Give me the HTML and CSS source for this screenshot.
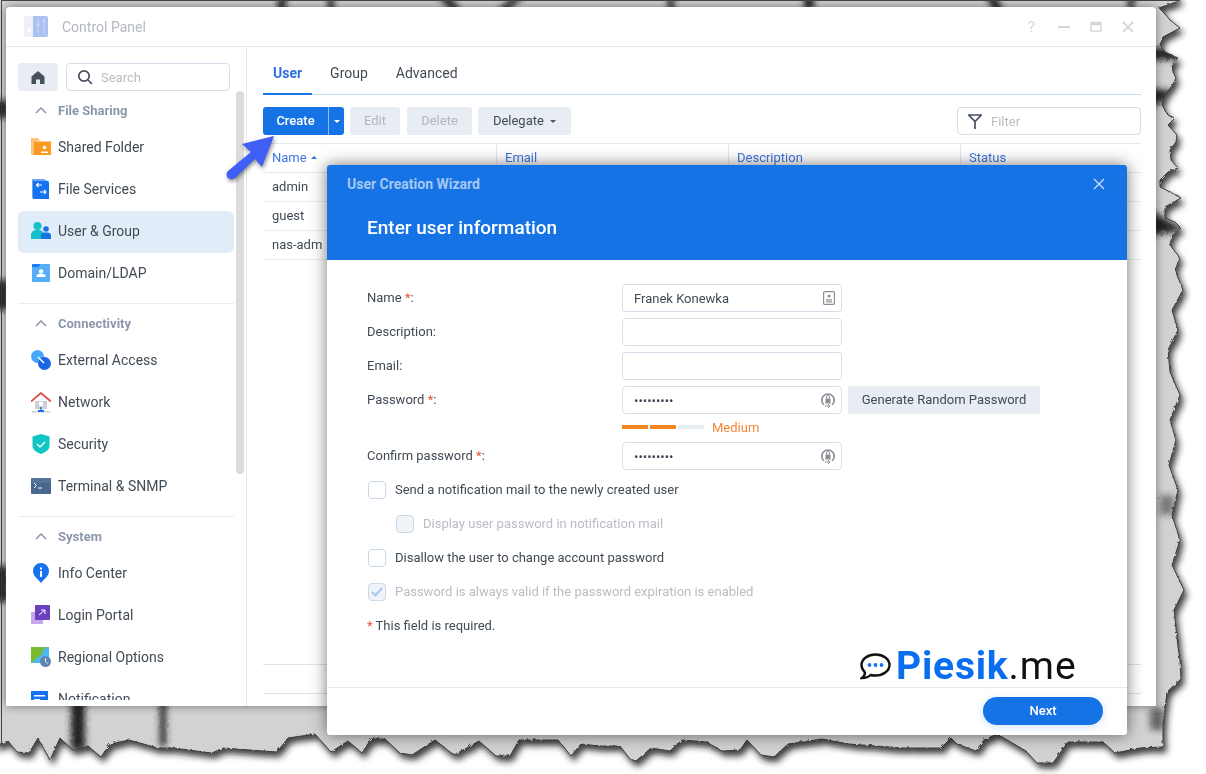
FILE: index.html
```html
<!DOCTYPE html>
<html lang="en">
<head>
  <meta charset="UTF-8" />
  <title>Control Panel</title>
  <link rel="stylesheet" href="styles.css">
</head>
<body>
  <!-- torn paper wallpaper behind the window -->
  <svg class="backdrop" width="1206" height="774" viewBox="0 0 1206 774">
    <defs>
      <filter id="torn" x="-2%" y="-2%" width="104%" height="104%">
        <feTurbulence type="fractalNoise" baseFrequency="0.3" numOctaves="2" seed="4" result="n" />
        <feDisplacementMap in="SourceGraphic" in2="n" scale="3" result="d" />
        <feDropShadow in="d" dx="3" dy="5" stdDeviation="3" flood-color="#222" flood-opacity="0.85" />
      </filter>
      <filter id="soft"><feGaussianBlur stdDeviation="3" /></filter>
      <clipPath id="paper">
        <path d="M-5 -5 L1179 -5 L1179 1 L1159 8 L1165 14 L1170 20 L1180 28 L1163 37 L1160 45 L1165 52 L1178 58 L1172 65 L1173 72 L1176 78 L1172 86 L1163 97 L1162 105 L1168 115 L1175 118 L1168 125 L1177 135 L1176 142 L1170 150 L1171 160 L1178 168 L1168 172 L1160 180 L1160 187 L1170 192 L1181 198 L1165 207 L1165 218 L1175 222 L1181 228 L1172 236 L1170 245 L1180 258 L1175 270 L1183 290 L1172 310 L1178 330 L1168 350 L1170 372 L1180 395 L1170 420 L1176 440 L1169 465 L1178 490 L1172 515 L1180 540 L1172 565 L1184 590 L1174 610 L1178 647 L1180 660 L1181 679 L1167 692 L1163 725 L1163 747 L1140 748 L1115 753 L1103 742 L1068 742 L1053 763 L1037 763 L1026 751 L997 734 L984 740 L976 751 L957 744 L951 738 L941 748 L903 748 L849 744 L822 739 L788 744 L774 757 L761 755 L747 740 L740 750 L722 751 L707 742 L682 740 L670 751 L651 748 L636 761 L630 759 L620 746 L600 746 L581 744 L571 756 L558 740 L519 740 L510 756 L496 756 L479 741 L454 755 L435 740 L412 755 L400 753 L385 739 L371 739 L362 753 L348 741 L331 752 L315 734 L288 738 L277 752 L223 748 L212 753 L173 748 L158 748 L129 740 L110 744 L101 757 L88 746 L73 750 L60 738 L50 760 L38 738 L29 753 L17 752 L8 741 L-5 746 Z" />
      </clipPath>
    </defs>
    <g filter="url(#torn)">
      <g clip-path="url(#paper)">
        <rect x="-5" y="-5" width="1216" height="784" fill="#d2d2d2" />
        <g filter="url(#soft)" fill="#222">
          <rect x="278" y="-6" width="8" height="20" />
          <rect x="328" y="-6" width="6" height="20" />
          <polygon points="436,-6 448,-6 462,12 452,12" />
          <polygon points="516,-6 526,-6 506,12 496,12" />
          <rect x="668" y="-6" width="6" height="18" />
          <rect x="804" y="-6" width="10" height="16" />
          <polygon points="985,-6 995,-6 1004,12 994,12" />
          <rect x="1128" y="-6" width="6" height="16" />
          <rect x="-6" y="100" width="14" height="18" />
          <rect x="-6" y="280" width="14" height="30" />
          <rect x="-6" y="566" width="14" height="36" />
          <rect x="1150" y="48" width="30" height="12" />
          <polygon points="1150,88 1180,92 1150,108" />
          <polygon points="1150,210 1185,230 1150,236" />
          <rect x="1150" y="708" width="14" height="22" opacity="0.6" />
          <rect x="1160" y="495" width="14" height="20" opacity="0.5" />
          <rect x="71" y="700" width="14" height="50" />
          <rect x="160" y="700" width="6" height="46" />
        </g>
      </g>
      <path class="tear-line" d="M1179 1 L1159 8 L1165 14 L1170 20 L1180 28 L1163 37 L1160 45 L1165 52 L1178 58 L1172 65 L1173 72 L1176 78 L1172 86 L1163 97 L1162 105 L1168 115 L1175 118 L1168 125 L1177 135 L1176 142 L1170 150 L1171 160 L1178 168 L1168 172 L1160 180 L1160 187 L1170 192 L1181 198 L1165 207 L1165 218 L1175 222 L1181 228 L1172 236 L1170 245 L1180 258 L1175 270 L1183 290 L1172 310 L1178 330 L1168 350 L1170 372 L1180 395 L1170 420 L1176 440 L1169 465 L1178 490 L1172 515 L1180 540 L1172 565 L1184 590 L1174 610 L1178 647 L1180 660 L1181 679 L1167 692 L1163 725 L1163 747 L1140 748 L1115 753 L1103 742 L1068 742 L1053 763 L1037 763 L1026 751 L997 734 L984 740 L976 751 L957 744 L951 738 L941 748 L903 748 L849 744 L822 739 L788 744 L774 757 L761 755 L747 740 L740 750 L722 751 L707 742 L682 740 L670 751 L651 748 L636 761 L630 759 L620 746 L600 746 L581 744 L571 756 L558 740 L519 740 L510 756 L496 756 L479 741 L454 755 L435 740 L412 755 L400 753 L385 739 L371 739 L362 753 L348 741 L331 752 L315 734 L288 738 L277 752 L223 748 L212 753 L173 748 L158 748 L129 740 L110 744 L101 757 L88 746 L73 750 L60 738 L50 760 L38 738 L29 753 L17 752 L8 741 L-5 746" />
    </g>
    <path class="edge-line" d="M1.5 742 L1.5 0.5 L1180 0.5" />
  </svg>

  <div class="window">
    <header class="titlebar">
      <svg class="app-icon" width="24" height="21" viewBox="0 0 24 21">
        <rect x="0" y="0" width="24" height="21" rx="2" fill="#eef0f7" />
        <path d="M9 0h13a2 2 0 0 1 2 2v17a2 2 0 0 1-2 2H9z" fill="#a9c2f1" />
        <path d="M14 2v16M20 2v16" stroke="#c9d9f6" stroke-width="1" />
        <path d="M12.500 9h3M18.500 5h3" stroke="#dbe6fa" stroke-width="1.200" />
        <circle cx="5" cy="14.500" r="2" fill="#fff" />
      </svg>
      <span class="app-title">Control Panel</span>
      <div class="win-controls">
        <span class="win-help">?</span>
        <svg width="12" height="12" viewBox="0 0 12 12"><path d="M0 6h12" stroke="#d4d7dc" stroke-width="2" /></svg>
        <svg width="12" height="12" viewBox="0 0 12 12"><rect x="1" y="1.5" width="10" height="8.5" fill="none" stroke="#d4d7dc" stroke-width="1.4" /><path d="M1 3h10" stroke="#d4d7dc" stroke-width="2.5" /></svg>
        <svg width="12" height="12" viewBox="0 0 12 12"><path d="M1 1l10 10M11 1L1 11" stroke="#d4d7dc" stroke-width="1.8" /></svg>
      </div>
    </header>

    <div class="win-body">
      <aside class="sidebar">
        <div class="side-top">
          <div class="home-btn">
            <svg width="14" height="13" viewBox="0 0 14 13"><path d="M7 0l6.5 5.5V13H9V8.500H5V13H.5V5.500z" fill="#47525f" /></svg>
          </div>
          <div class="search-box">
            <svg width="16" height="16" viewBox="0 0 16 16"><circle cx="7" cy="7" r="5.2" fill="none" stroke="#47525f" stroke-width="1.700" /><path d="M11 11l4 4" stroke="#47525f" stroke-width="1.700" /></svg>
            <span>Search</span>
          </div>
        </div>
        <div class="side-scroll">
          <div class="side-group">
            <div class="side-head"><svg width="12" height="7" viewBox="0 0 12 7"><path d="M1 6l5-5 5 5" fill="none" stroke="#8d97ab" stroke-width="1.500" /></svg>File Sharing</div>
            <div class="side-item">
              <svg width="20" height="20" viewBox="0 0 20 20"><path d="M0 1h7l2 3h-9z" fill="#fcc27a" /><path d="M0 3h5v15H0z" fill="#fcc27a" /><path d="M3 4.500h17V18H3z" fill="#fb9a1f" /><circle cx="13.500" cy="10.500" r="1.800" fill="#fff" /><path d="M10 14.500h7v1.500h-7z" fill="#fff" /></svg>
              Shared Folder
            </div>
            <div class="side-item">
              <svg width="20" height="20" viewBox="0 0 20 20"><path d="M1 0h12l5 3v17H3a2 2 0 0 1-2-2z" fill="#6ca6f7" /><path d="M2 2h14a2 2 0 0 1 2 2v16H2z" fill="#1673f0" /><path d="M11 6H5.500M7.500 4L5.500 6l2 2M9 13h6M13 11l2 2-2 2" fill="none" stroke="#fff" stroke-width="1.100" /></svg>
              File Services
            </div>
            <div class="side-item active">
              <svg width="20" height="20" viewBox="0 0 20 20"><circle cx="6.500" cy="5" r="4" fill="#14bfc9" /><path d="M0 18v-4a5 5 0 0 1 5-5h3a5 5 0 0 1 5 5v4z" fill="#14bfc9" /><circle cx="15" cy="8" r="2.800" fill="#1673e6" /><path d="M10 18v-3a3.500 3.500 0 0 1 3.500-3.500h3A3.500 3.500 0 0 1 20 15v3z" fill="#1673e6" /></svg>
              User &amp; Group
            </div>
            <div class="side-item">
              <svg width="20" height="20" viewBox="0 0 20 20"><path d="M1 2a1 1 0 0 1 1-1h16a1 1 0 0 1 1 1v17H1z" fill="#56adfa" /><path d="M1 2a1 1 0 0 1 1-1h7L8 4H1z" fill="#1b7cf0" /><circle cx="10" cy="8.500" r="2.200" fill="#fff" /><path d="M5.500 14v-1a2 2 0 0 1 2-2h5a2 2 0 0 1 2 2v1z" fill="#fff" /></svg>
              Domain/LDAP
            </div>
          </div>
          <div class="side-group">
            <div class="side-head"><svg width="12" height="7" viewBox="0 0 12 7"><path d="M1 6l5-5 5 5" fill="none" stroke="#8d97ab" stroke-width="1.500" /></svg>Connectivity</div>
            <div class="side-item">
              <svg width="20" height="20" viewBox="0 0 20 20"><circle cx="6.500" cy="6.500" r="6.500" fill="#46a8fb" /><circle cx="13.500" cy="13.500" r="6.500" fill="#1b66e6" /><path d="M7 7l6 6" stroke="#fff" stroke-width="1.500" /></svg>
              External Access
            </div>
            <div class="side-item">
              <svg width="20" height="21" viewBox="0 0 20 21"><path d="M4 9h12v8H4z" fill="#ccd0d6" /><path d="M0 9.500L10 1l10 8.500" fill="none" stroke="#d9534c" stroke-width="1.800" /><path d="M8 10h4v4H8z" fill="#fff" /><path d="M1 19h18v1.500H1z" fill="#cbd0d8" /><path d="M7 18h6v2H7zM9.300 15h1.400v3H9.300z" fill="#1673e6" /></svg>
              Network
            </div>
            <div class="side-item">
              <svg width="20" height="20" viewBox="0 0 20 20"><path d="M10 0l8.500 2.500V12c0 3.500-4 6.500-8.500 8-4.500-1.500-8.500-4.500-8.500-8V2.500z" fill="#10c6c4" /><path d="M6 10l3 3 5-5" fill="none" stroke="#fff" stroke-width="1.300" /></svg>
              Security
            </div>
            <div class="side-item">
              <svg width="20" height="16" viewBox="0 0 20 16"><rect width="20" height="16" rx="1" fill="#47678e" /><path d="M0 0h20v5H0z" fill="#5f7da2" opacity=".6" /><path d="M3 5l2.500 2.500L3 10M7 10h4" fill="none" stroke="#fff" stroke-width="1" /></svg>
              Terminal &amp; SNMP
            </div>
          </div>
          <div class="side-group">
            <div class="side-head"><svg width="12" height="7" viewBox="0 0 12 7"><path d="M1 6l5-5 5 5" fill="none" stroke="#8d97ab" stroke-width="1.500" /></svg>System</div>
            <div class="side-item">
              <svg width="20" height="20" viewBox="0 0 20 20"><path d="M10 0a8 8 0 0 1 8 8c0 5-5 8-8 12-3-4-8-7-8-12a8 8 0 0 1 8-8z" fill="#1673f0" /><path d="M9 8h2v6H9zM9 4.500h2v2H9z" fill="#fff" /></svg>
              Info Center
            </div>
            <div class="side-item">
              <svg width="20" height="20" viewBox="0 0 20 20"><rect x="0" y="7" width="12" height="12" rx="1" fill="#c3a6ee" /><rect x="4" y="0" width="15" height="15" rx="1" fill="#6a3fc0" /><path d="M8 10l6-5M10 5h4v4" fill="none" stroke="#fff" stroke-width="1" /></svg>
              Login Portal
            </div>
            <div class="side-item">
              <svg width="20" height="20" viewBox="0 0 20 20"><path d="M0 0h18v16H0z" fill="#4cb9f3" /><path d="M0 0h6l6 6-12 10z" fill="#79bb2a" /><path d="M7 0h9l-6 5z" fill="#79bb2a" /><circle cx="14.500" cy="14.500" r="5.500" fill="#5f87b3" /><path d="M14.500 11.500v3l2 2" fill="none" stroke="#fff" stroke-width="1" /></svg>
              Regional Options
            </div>
            <div class="side-item">
              <svg width="20" height="20" viewBox="0 0 20 20"><path d="M0 2h17v18H0z" fill="#1673f0" /><path d="M3 6h11v1.500H3zM3 10h6v1.500H3z" fill="#fff" /></svg>
              Notification
            </div>
          </div>
          <div class="side-thumb"></div>
        </div>
      </aside>

      <main class="content">
        <nav class="tabs">
          <span class="tab active">User</span>
          <span class="tab">Group</span>
          <span class="tab">Advanced</span>
        </nav>
        <div class="toolbar">
          <div class="btn-split">
            <span class="btn-main">Create</span>
            <span class="btn-caret"><i class="caret white"></i></span>
          </div>
          <span class="btn off btn-edit">Edit</span>
          <span class="btn off btn-delete">Delete</span>
          <span class="btn btn-delegate">Delegate <i class="caret"></i></span>
          <div class="filter-box">
            <svg width="14" height="15" viewBox="0 0 14 15"><path d="M.8 1h12.400L7 7.500zM7 7v8" fill="none" stroke="#47525f" stroke-width="1.700" /></svg>
            <span>Filter</span>
          </div>
        </div>
        <div class="grid">
          <div class="grid-head">
            <div class="cell">Name <i class="sort"></i></div>
            <div class="cell">Email</div>
            <div class="cell">Description</div>
            <div class="cell">Status</div>
          </div>
          <div class="grid-row">admin</div>
          <div class="grid-row">guest</div>
          <div class="grid-row">nas-adm</div>
        </div>
        <div class="pager"></div>
      </main>
    </div>
  </div>

  <svg class="arrow" width="56" height="52" viewBox="0 0 56 52">
    <path d="M48 2L16 10l9 8L2 37a4.500 4.500 0 0 0 7 7L29 25l7 8z" fill="#3f5ff6" />
  </svg>

  <section class="modal">
    <div class="modal-head">
      <div class="modal-top">
        <span class="modal-title">User Creation Wizard</span>
        <svg width="12" height="12" viewBox="0 0 12 12"><path d="M1 1l10 10M11 1L1 11" stroke="#cfe0f8" stroke-width="1.300" /></svg>
      </div>
      <h2>Enter user information</h2>
    </div>
    <div class="modal-body">
      <div class="form-grid">
        <label>Name <em>*</em>:</label>
        <div class="field">Franek Konewka
          <svg width="12" height="14" viewBox="0 0 12 14"><rect x=".6" y=".6" width="10.800" height="12.800" rx="1" fill="none" stroke="#8a8f96" stroke-width="1.200" /><circle cx="6" cy="5" r="1.500" fill="#8a8f96" /><path d="M3 8h6v1.400H3zM3 10h6v1.400H3z" fill="#a5a9af" /></svg>
        </div>
        <span></span>
        <label>Description:</label>
        <div class="field"></div>
        <span></span>
        <label>Email:</label>
        <div class="field"></div>
        <span></span>
        <label>Password <em>*</em>:</label>
        <div class="field dots">•••••••••
          <svg width="14" height="16" viewBox="0 0 14 16"><path d="M3 13a6.200 6.200 0 1 1 8 0" fill="none" stroke="#8a8f96" stroke-width="1.600" /><path d="M4.500 6.500h5v5h-5z" fill="#8a8f96" /><path d="M5.500 6.500V5a1.500 1.500 0 0 1 3 0v1.500" fill="none" stroke="#8a8f96" /><path d="M4 14h4M7 12l2 2-2 2" fill="none" stroke="#8a8f96" /></svg>
        </div>
        <span class="btn btn-generate">Generate Random Password</span>
        <span></span>
        <div class="strength"><b class="on"></b><b class="on"></b><b></b><span>Medium</span></div>
        <span></span>
        <label>Confirm password <em>*</em>:</label>
        <div class="field dots">•••••••••
          <svg width="14" height="16" viewBox="0 0 14 16"><path d="M3 13a6.200 6.200 0 1 1 8 0" fill="none" stroke="#8a8f96" stroke-width="1.600" /><path d="M4.500 6.500h5v5h-5z" fill="#8a8f96" /><path d="M5.500 6.500V5a1.500 1.500 0 0 1 3 0v1.500" fill="none" stroke="#8a8f96" /><path d="M4 14h4M7 12l2 2-2 2" fill="none" stroke="#8a8f96" /></svg>
        </div>
        <span></span>
      </div>
      <div class="checks">
        <div class="check"><i class="box"></i>Send a notification mail to the newly created user</div>
        <div class="check sub off"><i class="box"></i>Display user password in notification mail</div>
        <div class="check"><i class="box"></i>Disallow the user to change account password</div>
        <div class="check off"><i class="box">
          <svg width="16" height="16" viewBox="0 0 16 16"><path d="M3 8l3.500 3.500L13 4" fill="none" stroke="#a9c9f2" stroke-width="2.200" /></svg>
        </i>Password is always valid if the password expiration is enabled</div>
      </div>
      <p class="note"><em>*</em> This field is required.</p>
      <div class="watermark">
        <svg width="31" height="27" viewBox="0 0 31 27"><path d="M15.500 1.500C8 1.500 1.500 6 1.500 12c0 3 1.500 5.500 3.500 7.500 0 2-1 4-3 5.500 3.500 0 6.500-1 8.500-3 1.500.5 3.500.5 5 .5 7.500 0 14-4.500 14-10.500S23 1.500 15.500 1.500z" fill="#fff" stroke="#111" stroke-width="2.400" /><circle cx="9.500" cy="12" r="1.900" fill="#1673f0" /><circle cx="15.500" cy="12" r="1.900" fill="#1673f0" /><circle cx="21.500" cy="12" r="1.900" fill="#1673f0" /></svg>
        <span class="wm-name">Piesik</span><span class="wm-dot">.me</span>
      </div>
    </div>
    <div class="modal-foot">
      <span class="btn-next">Next</span>
    </div>
  </section>
</body>
</html>
```

FILE: styles.css
```css
body {
  margin: 0;
  width: 1206px;
  height: 774px;
  overflow: hidden;
  background: #fff;
  font-family: Roboto, "Liberation Sans", sans-serif;
  font-size: 13px;
  color: #414b55;
}

/* wallpaper */
.backdrop { position: absolute; left: 0; top: 0; }
.tear-line { fill: none; stroke: #3c3c3c; stroke-width: 1; }
.edge-line { fill: none; stroke: #444; stroke-width: 1; }

/* main window */
.window {
  position: relative;
  margin: 7px 0 0 6px;
  width: 1150px;
  height: 699px;
  background: #fff;
  border-radius: 4px 4px 0 0;
  box-shadow: 0 0 10px rgba(0,0,0,0.45);
  display: flex;
  flex-direction: column;
}
.titlebar {
  height: 39px;
  flex: none;
  border-bottom: 1px solid #e3e9f0;
  display: flex;
  align-items: center;
  padding: 0 22px 0 18px;
}
.app-title { margin-left: 14px; font-size: 14px; color: #b4b9c0; }
.win-controls { margin-left: auto; display: flex; align-items: center; gap: 20px; }
.win-help { font-size: 15px; color: #d4d7dc; width: 10px; }

.win-body { flex: 1; display: flex; min-height: 0; }

/* sidebar */
.sidebar {
  width: 241px;
  flex: none;
  box-sizing: border-box;
  border-right: 1px solid #e3e9f0;
  padding: 16px 0 6px 12px;
  display: flex;
  flex-direction: column;
  min-height: 0;
}
.side-top { display: flex; gap: 8px; height: 28px; flex: none; }
.home-btn {
  width: 40px;
  background: #e9edf3;
  border-radius: 3px;
  display: flex;
  align-items: center;
  justify-content: center;
}
.search-box {
  width: 164px;
  box-sizing: border-box;
  border: 1px solid #d3dee9;
  border-radius: 4px;
  display: flex;
  align-items: center;
  padding-left: 10px;
  gap: 8px;
  color: #b9bdc4;
}
.side-scroll { position: relative; flex: 1; overflow: hidden; }
.side-group { width: 216px; border-bottom: 1px solid #e9edf3; padding-bottom: 8px; }
.side-head {
  height: 36px;
  box-sizing: border-box;
  padding: 13px 0 0 17px;
  display: flex;
  gap: 11px;
  align-items: flex-start;
  font-weight: 700;
  line-height: 14px;
  color: #8d97ab;
}
.side-head svg { margin-top: 3px; }
.side-item {
  height: 42px;
  display: flex;
  align-items: center;
  gap: 7px;
  padding-left: 13px;
  font-size: 14px;
  border-radius: 6px;
  padding-bottom: 2px;
  box-sizing: border-box;
}
.side-item svg { flex: none; }
.side-item.active { background: #e1ecf9; }
.side-thumb {
  position: absolute;
  left: 218px;
  top: 0;
  width: 8px;
  height: 383px;
  background: #dcdcdc;
  border-radius: 4px;
}

/* content */
.content {
  flex: 1;
  display: flex;
  flex-direction: column;
  padding: 0 15px 0 16px;
  min-width: 0;
}
.tabs { height: 47px; flex: none; display: flex; border-bottom: 1px solid #c9dbee; }
.tab {
  padding: 0 10px;
  margin-right: 8px;
  font-size: 14px;
  line-height: 52px;
  height: 47px;
  box-sizing: border-box;
}
.tab.active { margin-right: 8px; color: #2f6fe0; font-weight: 700; border-bottom: 2px solid #1673e6; height: 48px; }

.toolbar { display: flex; margin-top: 12px; height: 28px; flex: none; gap: 6px; }
.btn {
  height: 28px;
  line-height: 28px;
  background: #e8edf4;
  border-radius: 3px;
  text-align: center;
  box-sizing: border-box;
}
.btn.off { color: #b1b6be; }
.btn-edit { width: 50px; }
.btn-delete { width: 65px; margin-left: 1px; }
.btn-delegate { width: 93px; }
.btn-split {
  width: 81px;
  display: flex;
  background: #1673e6;
  border-radius: 3px;
  color: #fff;
  font-weight: 500;
  line-height: 28px;
}
.btn-main { width: 65px; text-align: center; border-right: 1px solid #8dbbf3; height: 28px; box-sizing: content-box; }
.btn-caret { flex: 1; display: flex; align-items: center; justify-content: center; }
.caret {
  display: inline-block;
  border: 3.5px solid transparent;
  border-top: 3.5px solid #4d5763;
  border-bottom: 0;
  vertical-align: 2px;
  margin-left: 3px;
}
.caret.white { border-top-color: #fff; margin: 0; }
.filter-box {
  margin-left: auto;
  width: 184px;
  box-sizing: border-box;
  border: 1px solid #d3dee9;
  border-radius: 4px;
  display: flex;
  align-items: center;
  padding-left: 10px;
  gap: 9px;
  color: #b9bdc4;
}

.grid { margin-top: 8px; }
.grid-head {
  display: grid;
  grid-template-columns: 233px 232px 232px 181px;
  height: 28px;
  border-top: 1px solid #e3e9f0;
  border-bottom: 1px solid #e3e9f0;
  line-height: 28px;
  color: #3f76e0;
}
.cell { padding-left: 8px; border-left: 1px solid #e3e9f0; }
.cell:first-child { padding-left: 9px; border-left: 0; }
.sort {
  display: inline-block;
  border: 3.5px solid transparent;
  border-bottom: 3.5px solid #2f6fe0;
  border-top: 0;
  vertical-align: 3px;
  margin-left: 1px;
}
.grid-row {
  height: 28px;
  line-height: 28px;
  padding-left: 9px;
  border-bottom: 1px solid #e8edf3;
}
.pager {
  margin-top: auto;
  margin-bottom: 12px;
  height: 28px;
  border-top: 1px solid #dde3ea;
  border-bottom: 1px solid #dde3ea;
}

/* arrow pointing at Create */
.arrow {
  position: absolute;
  left: 226px;
  top: 134px;
  filter: drop-shadow(1px 2px 2px rgba(0,0,0,0.45));
}

/* wizard dialog */
.modal {
  position: absolute;
  left: 327px;
  top: 165px;
  width: 800px;
  height: 570px;
  background: #fff;
  border-radius: 3px;
  box-shadow: 0 0 16px rgba(0,0,0,0.55);
  display: flex;
  flex-direction: column;
}
.modal-head {
  height: 95px;
  flex: none;
  background: #1673e6;
  border-radius: 3px 3px 0 0;
  padding: 9px 22px 0 20px;
  box-sizing: border-box;
}
.modal-top { display: flex; align-items: center; justify-content: space-between; height: 20px; }
.modal-title { font-size: 14px; font-weight: 700; color: #a5c8f5; }
.modal-head h2 {
  margin: 21px 0 0 20px;
  font-size: 19px;
  line-height: 26px;
  font-weight: 500;
  color: #fff;
}
.modal-body { position: relative; flex: 1; padding: 24px 40px 0; }
.form-grid {
  display: grid;
  grid-template-columns: 255px 220px auto;
  grid-auto-rows: auto;
  row-gap: 6px;
  align-items: center;
}
.form-grid label { padding-bottom: 2px; }
.form-grid em, .note em { color: #e8503e; font-style: normal; }
.field {
  height: 28px;
  box-sizing: border-box;
  border: 1px solid #d3dee9;
  border-radius: 4px;
  display: flex;
  align-items: center;
  justify-content: space-between;
  padding: 0 6px 0 11px;
}
.btn-generate { width: 192px; margin-left: 6px; }
.strength {
  height: 16px;
  box-sizing: border-box;
  padding-bottom: 2px;
  display: flex;
  align-items: center;
  gap: 2px;
}
.strength b { width: 26px; height: 4px; background: #e8edf4; }
.strength b.on { background: #f5851f; }
.strength span { margin-left: 6px; color: #f5853a; }

.checks { margin-top: 6px; display: flex; flex-direction: column; gap: 6px; }
.check {
  height: 28px;
  box-sizing: border-box;
  padding: 0 0 2px 1px;
  display: flex;
  align-items: center;
  gap: 9px;
}
.check.sub { padding-left: 29px; }
.check.off { color: #b9bdc4; }
.box {
  width: 18px;
  height: 18px;
  margin-bottom: -2px;
  box-sizing: border-box;
  border: 1px solid #c9d8e8;
  border-radius: 4px;
  display: flex;
  align-items: center;
  justify-content: center;
}
.check.off .box { background: #f0f3f8; }
.note { margin: 7px 0 0; line-height: 26px; }

.watermark {
  position: absolute;
  left: 533px;
  top: 381px;
  display: flex;
  align-items: center;
  font-size: 39px;
  line-height: 50px;
  gap: 5px;
}
.wm-name { color: #0a6ef0; font-weight: 700; letter-spacing: 0.8px; }
.wm-dot { color: #111; margin-left: -5px; letter-spacing: 1px; }

.modal-foot {
  height: 48px;
  flex: none;
  border-top: 1px solid #e3e9f0;
  display: flex;
  justify-content: flex-end;
  padding: 9px 24px 0;
  box-sizing: border-box;
}
.btn-next {
  width: 120px;
  height: 28px;
  line-height: 28px;
  text-align: center;
  background: #1673e6;
  border-radius: 14px;
  color: #fff;
  font-weight: 500;
  box-shadow: 0 2px 8px rgba(22,115,230,0.2);
}
```
